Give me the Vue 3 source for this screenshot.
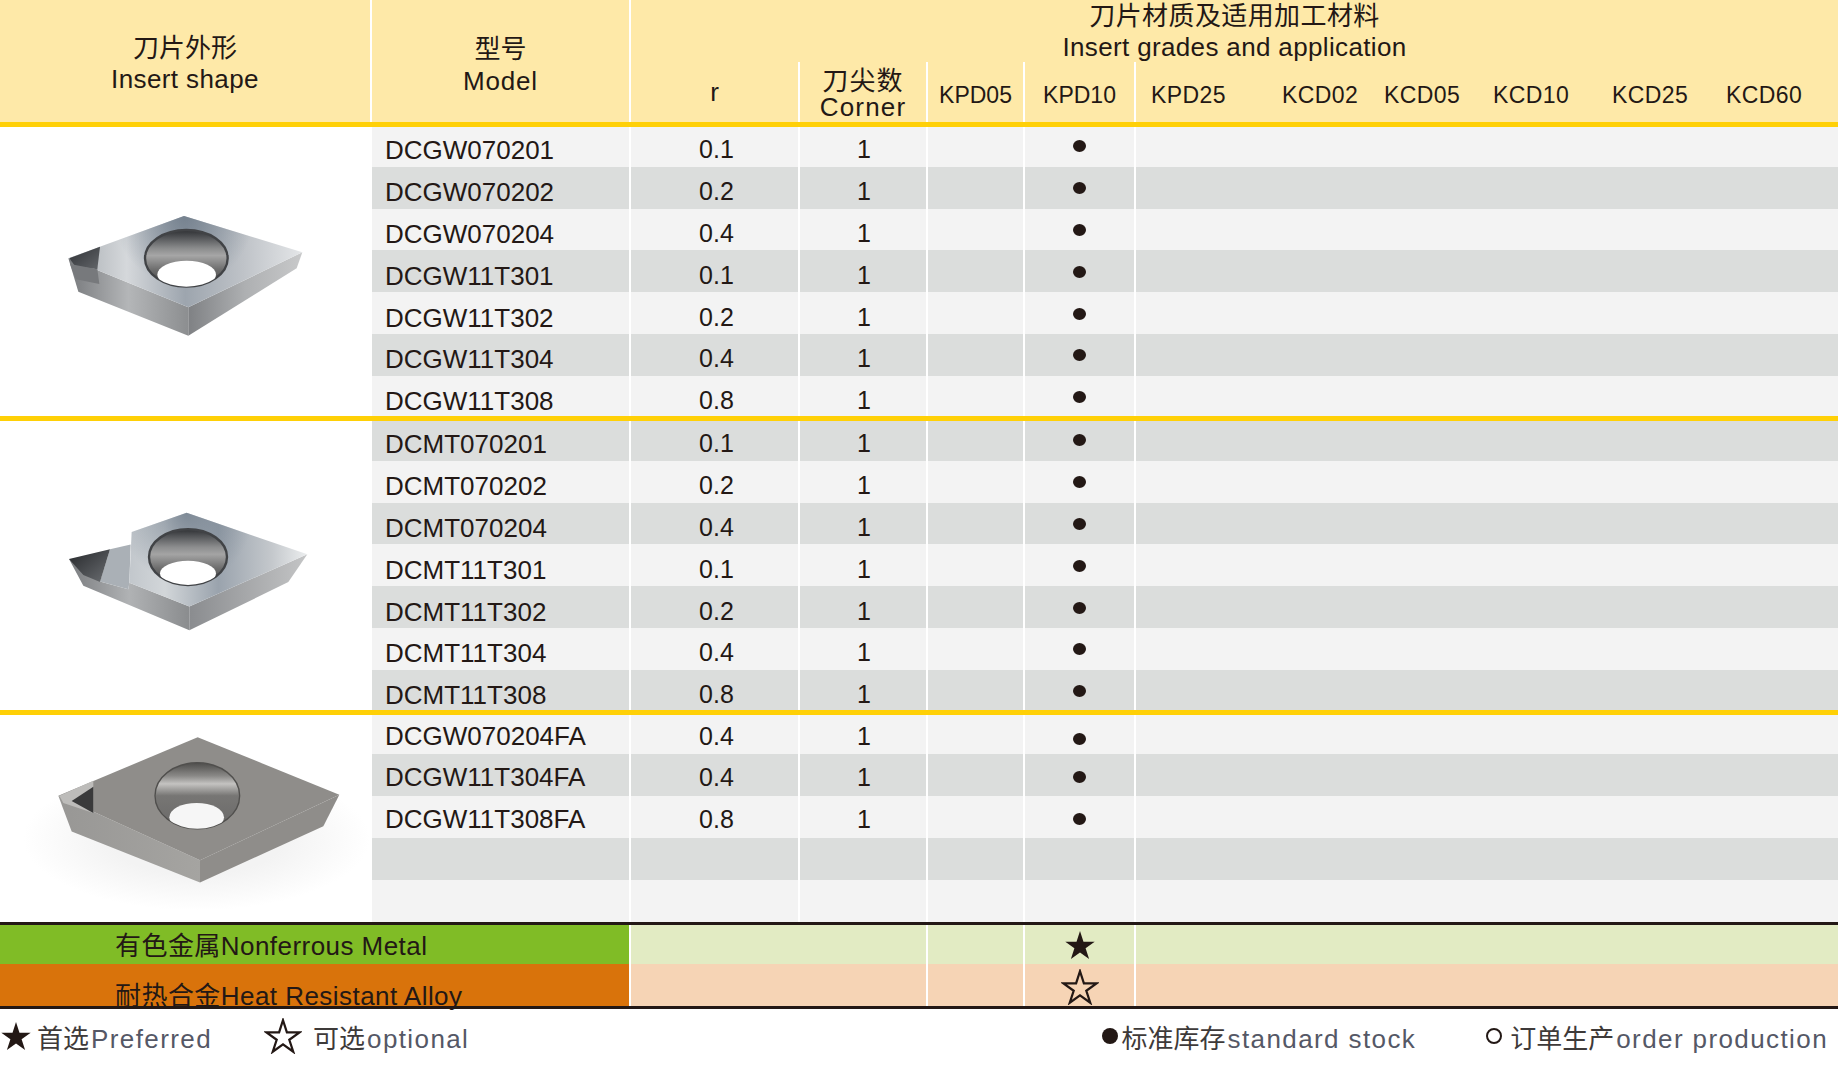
<template>
  <div class="sheet">
    <!-- 表頭 -->
    <div class="head">
      <div class="head-shape">
        <div class="cn">刀片外形</div>
        <div class="en">Insert shape</div>
      </div>
      <div class="head-model">
        <div class="cn">型号</div>
        <div class="en">Model</div>
      </div>
      <div class="head-group">
        <div class="group-title">
          <div class="title-cn">刀片材质及适用加工材料</div>
          <div class="title-en">Insert grades and application</div>
        </div>
        <div class="sub-head">
          <div class="sub-cell">r</div>
          <div class="sub-cell sub-corner">
            <div class="corner-cn">刀尖数</div>
            <div class="corner-en">Corner</div>
          </div>
          <div class="sub-cell sub-grade">KPD05</div>
          <div class="sub-cell sub-grade">KPD10</div>
          <div class="sub-rest">
            <span v-for="g of restGrades" :key="g">{{ g }}</span>
          </div>
        </div>
      </div>
    </div>
    <div class="gold"></div>

    <!-- 刀片分組 -->
    <template v-for="(s, si) of sections" :key="s.id">
      <div class="section" :class="'section-' + s.id">
        <div class="shape">
          <svg v-if="s.id === 'a'" class="insert" viewBox="-120 -189 1116 867" preserveAspectRatio="none">
            <defs>
              <linearGradient id="a-top" x1="0" y1="0" x2="1" y2="0">
                <stop offset="0" stop-color="#a6abb0" />
                <stop offset="0.25" stop-color="#d5d8db" />
                <stop offset="0.5" stop-color="#9da5ae" />
                <stop offset="0.75" stop-color="#bfc3c8" />
                <stop offset="1" stop-color="#e4e6e8" />
              </linearGradient>
              <radialGradient id="a-shade" gradientUnits="userSpaceOnUse" cx="432" cy="78" r="210">
                <stop offset="0" stop-color="#6f7c8a" stop-opacity="0.85" />
                <stop offset="1" stop-color="#6f7c8a" stop-opacity="0" />
              </radialGradient>
              <linearGradient id="a-left" x1="0" y1="0" x2="1" y2="0">
                <stop offset="0" stop-color="#77797c" />
                <stop offset="0.5" stop-color="#b4b6b8" />
                <stop offset="1" stop-color="#8c8e90" />
              </linearGradient>
              <linearGradient id="a-right" x1="0" y1="0" x2="1" y2="0">
                <stop offset="0" stop-color="#7f8184" />
                <stop offset="0.5" stop-color="#aeb0b2" />
                <stop offset="1" stop-color="#c8c9ca" />
              </linearGradient>
              <linearGradient id="a-hole" x1="0" y1="0" x2="0" y2="1">
                <stop offset="0" stop-color="#2f3134" />
                <stop offset="0.1" stop-color="#4a4c4f" />
                <stop offset="0.32" stop-color="#8a8b8c" />
                <stop offset="0.45" stop-color="#a6a6a6" />
                <stop offset="0.7" stop-color="#6d6d6d" />
                <stop offset="1" stop-color="#3f3f3f" />
              </linearGradient>
              <linearGradient id="a-tip" x1="0" y1="0" x2="1" y2="1">
                <stop offset="0" stop-color="#2f3135" />
                <stop offset="1" stop-color="#63666a" />
              </linearGradient>
              <clipPath id="a-clip"><ellipse cx="439" cy="205" rx="124" ry="85" /></clipPath>
            </defs>
            <polygon points="85,205 115,305 445,437 445,352" fill="url(#a-left)" />
            <polygon points="445,352 787,187 770,235 445,437" fill="url(#a-right)" />
            <polygon points="85,205 432,78 787,187 445,352" fill="url(#a-top)" />
            <polygon points="85,205 432,78 787,187 445,352" fill="url(#a-shade)" />
            <polygon points="88,205 180,170 172,238 105,228" fill="url(#a-tip)" />
            <polygon points="90,222 172,238 178,282 108,268" fill="#77797c" />
            <ellipse cx="439" cy="205" rx="124" ry="85" fill="url(#a-hole)" stroke="#414346" stroke-width="7" />
            <ellipse cx="440" cy="254" rx="88" ry="42" fill="#fff" clip-path="url(#a-clip)" />
          </svg>

          <svg v-else-if="s.id === 'b'" class="insert" viewBox="0 59 1116 809" preserveAspectRatio="none">
            <defs>
              <linearGradient id="b-top" x1="0" y1="0" x2="1" y2="0">
                <stop offset="0" stop-color="#c2c7cc" />
                <stop offset="0.2" stop-color="#d2d6d9" />
                <stop offset="0.5" stop-color="#9aa3ad" />
                <stop offset="0.8" stop-color="#c4c8cc" />
                <stop offset="1" stop-color="#eceeef" />
              </linearGradient>
              <radialGradient id="b-shade" gradientUnits="userSpaceOnUse" cx="560" cy="316" r="200">
                <stop offset="0" stop-color="#6f7c8a" stop-opacity="0.8" />
                <stop offset="1" stop-color="#6f7c8a" stop-opacity="0" />
              </radialGradient>
              <linearGradient id="b-left" x1="0" y1="0" x2="1" y2="0">
                <stop offset="0" stop-color="#7b7d80" />
                <stop offset="0.5" stop-color="#b0b2b4" />
                <stop offset="1" stop-color="#8a8c8e" />
              </linearGradient>
              <linearGradient id="b-right" x1="0" y1="0" x2="1" y2="0">
                <stop offset="0" stop-color="#8a8c8f" />
                <stop offset="1" stop-color="#c4c5c6" />
              </linearGradient>
              <linearGradient id="b-hole" x1="0" y1="0" x2="0" y2="1">
                <stop offset="0" stop-color="#2f3134" />
                <stop offset="0.1" stop-color="#4d4f52" />
                <stop offset="0.32" stop-color="#8c8d8e" />
                <stop offset="0.45" stop-color="#a4a4a4" />
                <stop offset="0.7" stop-color="#6d6d6d" />
                <stop offset="1" stop-color="#3f3f3f" />
              </linearGradient>
              <linearGradient id="b-tip" x1="0" y1="0" x2="1" y2="1">
                <stop offset="0" stop-color="#25272a" />
                <stop offset="1" stop-color="#6b6e72" />
              </linearGradient>
              <clipPath id="b-clip"><ellipse cx="564" cy="440" rx="117" ry="78" /></clipPath>
            </defs>
            <polygon points="207,445 250,520 568,645 568,578 388,512 385,530 300,508" fill="url(#b-left)" />
            <polygon points="568,578 922,432 865,510 568,645" fill="url(#b-right)" />
            <polygon points="330,418 392,405 388,512 385,530 300,508" fill="#aab0b6" />
            <polygon points="395,370 560,316 922,432 568,578 388,512" fill="url(#b-top)" />
            <polygon points="395,370 560,316 922,432 568,578 388,512" fill="url(#b-shade)" />
            <polygon points="207,445 330,418 300,510 250,490" fill="url(#b-tip)" />
            <ellipse cx="564" cy="440" rx="117" ry="78" fill="url(#b-hole)" stroke="#414346" stroke-width="7" />
            <ellipse cx="564" cy="486" rx="84" ry="36" fill="#fff" clip-path="url(#b-clip)" />
          </svg>

          <svg v-else class="insert" viewBox="0 885 1116 577" preserveAspectRatio="none">
            <defs>
              <radialGradient id="c-shadow" cx="0.5" cy="0.5" r="0.5">
                <stop offset="0.5" stop-color="#f3f3f3" />
                <stop offset="1" stop-color="#ffffff" />
              </radialGradient>
              <linearGradient id="c-hole" x1="0" y1="0" x2="0" y2="1">
                <stop offset="0" stop-color="#4d4c4a" />
                <stop offset="0.2" stop-color="#8a8987" />
                <stop offset="0.32" stop-color="#c4c3c1" />
                <stop offset="0.5" stop-color="#777674" />
                <stop offset="1" stop-color="#6a6968" />
              </linearGradient>
              <linearGradient id="c-left" x1="0" y1="0" x2="1" y2="0">
                <stop offset="0" stop-color="#989795" />
                <stop offset="1" stop-color="#a5a4a1" />
              </linearGradient>
              <clipPath id="c-clip"><ellipse cx="592" cy="1110" rx="127" ry="92" /></clipPath>
            </defs>
            <ellipse cx="590" cy="1230" rx="520" ry="200" fill="url(#c-shadow)" />
            <polygon points="175,1110 215,1210 600,1352 600,1290" fill="url(#c-left)" />
            <polygon points="600,1290 1018,1107 970,1195 600,1352" fill="#8f8d8a" />
            <polygon points="175,1110 593,947 1018,1107 600,1290" fill="#8f8d8a" />
            <polygon points="178,1110 280,1068 280,1158 190,1130" fill="#bdbcba" />
            <polygon points="280,1085 215,1125 280,1158" fill="#3a3a3b" />
            <ellipse cx="592" cy="1110" rx="127" ry="92" fill="url(#c-hole)" stroke="#504f4d" stroke-width="4" />
            <ellipse cx="590" cy="1170" rx="82" ry="40" fill="#f6f6f6" clip-path="url(#c-clip)" />
          </svg>
        </div>
        <div class="rows">
          <div
            v-for="(row, i) of s.rows"
            :key="i"
            class="row"
            :class="{ dark: (i + s.offset) % 2 === 1 }"
          >
            <div class="cell model">{{ row.model }}</div>
            <div class="cell value value-r">{{ row.r }}</div>
            <div class="cell value value-n">{{ row.n }}</div>
            <div class="cell"></div>
            <div class="cell mark"><span v-if="row.model" class="dot"></span></div>
            <div class="cell"></div>
          </div>
        </div>
      </div>
      <div v-if="si < sections.length - 1" class="gold"></div>
    </template>

    <!-- 適用材料 -->
    <div class="rule"></div>
    <div class="band band-green">
      <div class="band-label">有色金属Nonferrous Metal</div>
      <div class="band-cell"></div>
      <div class="band-cell"></div>
      <div class="band-cell band-star">
        <svg class="star" viewBox="0 0 30 30"><polygon :points="starPoints" fill="#231815" /></svg>
      </div>
      <div class="band-cell"></div>
    </div>
    <div class="band band-orange">
      <div class="band-label">耐热合金Heat Resistant Alloy</div>
      <div class="band-cell"></div>
      <div class="band-cell"></div>
      <div class="band-cell band-star">
        <svg class="star-line" viewBox="-1 -1 32 32"><polygon :points="starPoints" fill="none" stroke="#231815" stroke-width="2" /></svg>
      </div>
      <div class="band-cell"></div>
    </div>
    <div class="rule"></div>

    <!-- 圖例 -->
    <div class="legend">
      <svg class="star" viewBox="0 0 30 30"><polygon :points="starPoints" fill="#231815" /></svg>
      <span class="legend-text first">首选<em>Preferred</em></span>
      <svg class="star-line legend-line" viewBox="-1 -1 32 32"><polygon :points="starPoints" fill="none" stroke="#231815" stroke-width="2" /></svg>
      <span class="legend-text second">可选<em>optional</em></span>
      <div class="legend-right">
        <span class="stock"></span>
        <span class="legend-text">标准库存<em>standard stock</em></span>
        <span class="order"></span>
        <span class="legend-text">订单生产<em>order production</em></span>
      </div>
    </div>
  </div>
</template>

<script setup>
const restGrades = ['KPD25', 'KCD02', 'KCD05', 'KCD10', 'KCD25', 'KCD60']

const starPoints = '15,1 18.47,11.73 29.7,11.7 20.6,18.32 24.1,29 15,22.4 5.9,29 9.39,18.32 0.3,11.7 11.53,11.73'

const row = (model, r) => ({ model, r, n: '1' })

const sections = [
  {
    id: 'a',
    offset: 0,
    rows: [
      row('DCGW070201', '0.1'),
      row('DCGW070202', '0.2'),
      row('DCGW070204', '0.4'),
      row('DCGW11T301', '0.1'),
      row('DCGW11T302', '0.2'),
      row('DCGW11T304', '0.4'),
      row('DCGW11T308', '0.8'),
    ],
  },
  {
    id: 'b',
    offset: 1,
    rows: [
      row('DCMT070201', '0.1'),
      row('DCMT070202', '0.2'),
      row('DCMT070204', '0.4'),
      row('DCMT11T301', '0.1'),
      row('DCMT11T302', '0.2'),
      row('DCMT11T304', '0.4'),
      row('DCMT11T308', '0.8'),
    ],
  },
  {
    id: 'c',
    offset: 0,
    rows: [
      row('DCGW070204FA', '0.4'),
      row('DCGW11T304FA', '0.4'),
      row('DCGW11T308FA', '0.8'),
      { model: '', r: '', n: '' },
      { model: '', r: '', n: '' },
    ],
  },
]
</script>

<style scoped>
.sheet {
  width: 1838px;
  height: 1080px;
  overflow: hidden;
  background: #fff;
  color: #231815;
  font-family: "Liberation Sans", "Noto Sans CJK SC", sans-serif;
  font-size: 26px;
}

.head {
  display: flex;
  height: 122px;
  background: #fee9a8;
}

.head-shape,
.head-model {
  padding-top: 33px;
  text-align: center;
  box-sizing: border-box;
}

.head-shape {
  width: 372px;
  border-right: 2px solid #fff;
}

.head-model {
  width: 257px;
}

.head-model .cn {
  padding-top: 1px;
}

.cn {
  line-height: 30px;
}

.en {
  line-height: 33px;
  letter-spacing: 0.4px;
}

.head-model .en {
  line-height: 35px;
  letter-spacing: 0.8px;
}

.head-group {
  flex: 1;
  display: flex;
  flex-direction: column;
  border-left: 2px solid #fff;
  box-sizing: border-box;
  text-align: center;
}

.group-title {
  height: 62px;
}

.title-cn {
  line-height: 32px;
  letter-spacing: 0.4px;
}

.title-en {
  line-height: 30px;
  letter-spacing: 0.35px;
}

.sub-head {
  flex: 1;
  display: grid;
  grid-template-columns: 167px 128px 97px 111px 1fr;
}

.sub-cell {
  display: flex;
  flex-direction: column;
  align-items: center;
  justify-content: center;
  box-sizing: border-box;
}

.sub-cell + .sub-cell {
  border-left: 2px solid #fff;
}

.sub-corner {
  padding-top: 4px;
}

.corner-cn,
.corner-en {
  line-height: 26px;
  letter-spacing: 1.2px;
}

.sub-grade {
  padding-top: 6px;
  font-size: 23px;
}

.sub-rest {
  display: grid;
  grid-template-columns: 131px 102px 109px 119px 114px 1fr;
  align-items: center;
  box-sizing: border-box;
  padding: 6px 0 0 15px;
  border-left: 2px solid #fff;
  font-size: 23px;
  letter-spacing: 0.4px;
  text-align: left;
}

.gold {
  height: 5px;
  background: #ffd006;
}

.section {
  display: flex;
  height: 289px;
}

.section-c {
  height: 207px;
}

.shape {
  width: 372px;
  flex: none;
  background: #fff;
}

.insert {
  display: block;
  width: 372px;
  height: 100%;
  filter: blur(0.7px);
}

.rows {
  flex: 1;
  display: flex;
  flex-direction: column;
  overflow: hidden;
}

.row {
  flex: none;
  height: 41.8px;
  display: grid;
  grid-template-columns: 257px 169px 128px 97px 111px 1fr;
  background: #f3f3f3;
}

.row:first-child {
  height: 39.8px;
}

.row.dark {
  background: #dbdddc;
}

.section-c .row {
  height: 42px;
}

.section-c .row:first-child {
  height: 39px;
}

.cell {
  display: flex;
  align-items: center;
  justify-content: center;
  box-sizing: border-box;
}

.cell + .cell {
  border-left: 2px solid #fff;
}

.model {
  justify-content: flex-start;
  padding: 10px 0 0 13px;
}

.value {
  padding-top: 8px;
  font-size: 25px;
}

.value-r {
  padding-left: 4px;
}

.value-n {
  padding-left: 2px;
}

.mark {
  padding-top: 1px;
}

.row:first-child .model {
  padding-top: 8px;
}

.row:first-child .value {
  padding-top: 6px;
}

.row:first-child .mark {
  padding-top: 0;
  padding-bottom: 1px;
}

.section-c .model,
.section-c .value,
.section-c .mark,
.section-c .row:first-child .model,
.section-c .row:first-child .value {
  padding-top: 4px;
}

.section-c .row:first-child .mark {
  padding-top: 8px;
  padding-bottom: 0;
}

.dot {
  width: 13px;
  height: 12px;
  border-radius: 50%;
  background: #231815;
}

.rule {
  height: 3px;
  background: #231815;
}

.band {
  display: grid;
  grid-template-columns: 629px 297px 97px 111px 1fr;
}

.band-green {
  grid-template-rows: 39px;
  background: #e2ebc3;
}

.band-orange {
  grid-template-rows: 42px;
  background: #f6d4b5;
}

.band-label {
  display: flex;
  align-items: center;
  box-sizing: border-box;
  padding-left: 115px;
  letter-spacing: 0.45px;
  white-space: nowrap;
}

.band-green .band-label {
  padding-bottom: 2px;
  background: #80bc26;
}

.band-orange .band-label {
  padding-top: 16px;
  background: #d9730b;
}

.band-cell {
  display: flex;
  align-items: center;
  justify-content: center;
  box-sizing: border-box;
  border-left: 2px solid #fff;
}

.band-orange .band-star {
  padding-top: 3px;
}

.star {
  flex: none;
  width: 30px;
  height: 30px;
}

.star-line {
  flex: none;
  width: 38px;
  height: 36px;
}

.legend {
  display: flex;
  align-items: center;
  box-sizing: border-box;
  height: 71px;
  padding: 0 10px 17px 1px;
}

.legend-text {
  white-space: nowrap;
  color: #3e3a39;
}

.legend-text em {
  font-style: normal;
  color: #555866;
  letter-spacing: 1.4px;
  margin-left: 2px;
}

.first {
  margin-left: 6px;
}

.legend-line {
  margin-left: 52px;
}

.second {
  margin-left: 11px;
}

.legend-right {
  margin-left: auto;
  display: flex;
  align-items: center;
}

.stock {
  width: 16px;
  height: 16px;
  border-radius: 50%;
  background: #231815;
  margin-right: 4px;
}

.order {
  box-sizing: border-box;
  width: 16px;
  height: 16px;
  border: 2.5px solid #231815;
  border-radius: 50%;
  margin: 0 8px 0 70px;
}
</style>

<style>
html,
body {
  margin: 0;
  background: #fff;
}
</style>
